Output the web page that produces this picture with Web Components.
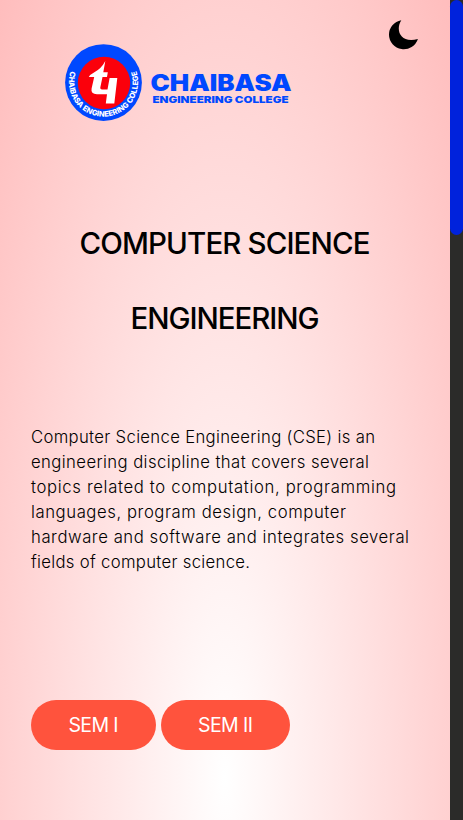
<!DOCTYPE html>
<html lang="en">
<head>
<meta charset="utf-8">
<title>Computer Science Engineering</title>
<style>
html,body{margin:0;height:820px;overflow:hidden}
body{font-family:Inter,"Open Sans","Liberation Sans",sans-serif;color:#000}
</style>
</head>
<body>
<college-page>
  <college-logo slot="logo"></college-logo>
  <theme-toggle slot="toggle"></theme-toggle>
  <page-heading slot="title">
    <fit-line width="291">COMPUTER SCIENCE</fit-line>
    <fit-line width="189">ENGINEERING</fit-line>
  </page-heading>
  <page-copy slot="copy">
    <fit-line width="344">Computer Science Engineering (CSE) is an</fit-line>
    <fit-line width="338">engineering discipline that covers several</fit-line>
    <fit-line width="365">topics related to computation, programming</fit-line>
    <fit-line width="315">languages, program design, computer</fit-line>
    <fit-line width="378">hardware and software and integrates several</fit-line>
    <fit-line width="219">fields of computer science.</fit-line>
  </page-copy>
  <pill-button slot="actions" style="--w:125px"><fit-line width="50">SEM I</fit-line></pill-button>
  <pill-button slot="actions" style="--w:129px"><fit-line width="55">SEM II</fit-line></pill-button>
</college-page>
<script>
const define = (name, html) => customElements.define(name, class extends HTMLElement {
  constructor() {
    super();
    this.attachShadow({mode: 'open'}).innerHTML = html;
  }
});

define('college-page', `<style>
:host{display:grid;grid-template-columns:450px 13px;height:820px}
main{background:radial-gradient(318px 1099px at 225px 777px,#fff,#ffbdbd);display:flex;flex-direction:column;min-width:0}
header{display:flex;justify-content:space-between;align-items:flex-start;height:206px;flex:none;padding:0 31px 0 64px;box-sizing:border-box}
.copy{padding:69px 0 0 31px}
.actions{display:flex;gap:5px;padding:125px 0 0 31px}
</style>
<main>
  <header><slot name="logo"></slot><slot name="toggle"></slot></header>
  <slot name="title"></slot>
  <div class="copy"><slot name="copy"></slot></div>
  <div class="actions"><slot name="actions"></slot></div>
</main>
<scroll-rail></scroll-rail>`);

define('scroll-rail', `<style>
:host{display:block;background:#2b2b29}
div{height:235px;background:#0022dc;border-radius:7px}
</style><div></div>`);

define('college-logo', `<style>
:host{display:block;padding-top:43px}
svg{display:block}
text{font-family:Inter,"Liberation Sans",sans-serif;font-weight:900}
</style>
<svg width="230" height="80" viewBox="64 43 230 80">
  <circle cx="103.5" cy="82.6" r="38.4" fill="#0048ff"/>
  <circle cx="104" cy="83" r="26.2" fill="#fb000b"/>
  <path id="ring" d="M70.7 71A34.6 34.6 0 1 0 136.3 71" fill="none"/>
  <text font-size="7.6" fill="#fff" style="font-weight:800"><textPath href="#ring" textLength="131" lengthAdjust="spacingAndGlyphs">CHAIBASA ENGINEERING COLLEGE</textPath></text>
  <path d="M105.300 61L103.300 72.300H107.800L107 77H102.500L100.300 87.500Q100 89.500 102 89.500H107.500L109.600 78H117.300L114.300 103.500H105.800L107 94.200H97Q90.500 94.200 91.600 88.500L94.200 77H88.800Q90 74.500 94 72.500Q101.500 68.500 105.300 61Z" fill="#fff"/>
  <text x="150.5" y="91" font-size="22.3" fill="#0048ff" textLength="141" lengthAdjust="spacingAndGlyphs">CHAIBASA</text>
  <text x="152.5" y="102.7" font-size="9.2" fill="#0048ff" textLength="136" lengthAdjust="spacingAndGlyphs">ENGINEERING COLLEGE</text>
</svg>`);

define('theme-toggle', `<style>
:host{display:block;padding-top:19px}svg{display:block}
</style>
<svg width="31" height="31" viewBox="388 19 31 31"><path d="M401.300 20.200A14.800 14.600 0 1 0 417.900 39C400.500 44 395 30 401.300 20.200Z"/></svg>`);

define('page-heading', `<style>
:host{display:flex;flex-direction:column;align-items:center;flex:none;font-size:29.500px;font-weight:550;line-height:75px}
</style><slot></slot>`);

define('page-copy', `<style>
:host{display:flex;flex-direction:column;align-items:flex-start;font-size:16.700px;font-weight:330;line-height:25px}
</style><slot></slot>`);

define('pill-button', `<style>
:host{display:flex;align-items:center;justify-content:center;width:var(--w);height:50px;border-radius:25px;background:#ff533d;color:#fff;font-size:19.500px;line-height:50px}
</style><slot></slot>`);

// A single line of text, tracked so that it spans the given width.
customElements.define('fit-line', class extends HTMLElement {
  constructor() {
    super();
    this.attachShadow({mode: 'open'}).innerHTML =
      '<style>:host{display:block;white-space:nowrap;width:max-content}span{display:inline-block}</style><span><slot></slot></span>';
  }
  connectedCallback() {
    const span = this.shadowRoot.querySelector('span');
    const target = +this.getAttribute('width');
    const gap = (target - span.getBoundingClientRect().width) / (this.textContent.length - 1);
    span.style.letterSpacing = gap + 'px';
    span.style.marginRight = -gap + 'px';
  }
});
</script>
</body>
</html>
